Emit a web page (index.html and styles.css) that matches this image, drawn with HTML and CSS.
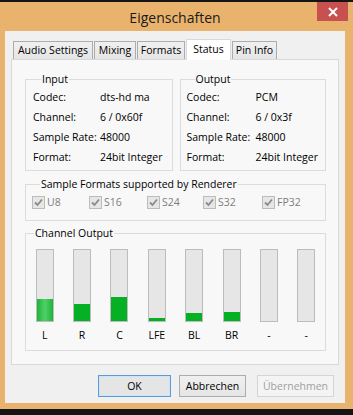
FILE: index.html
```html
<!DOCTYPE html>
<html>
<head>
<meta charset="utf-8">
<link rel="stylesheet" href="styles.css">
</head>
<body>
<div class="window">
  <div class="titlebar">
    <span></span>
    <div class="title">Eigenschaften</div>
    <div class="close"><svg width="10" height="10" viewBox="0 0 10 10"><path d="M1 1L9 9M9 1L1 9" stroke="#fff" stroke-width="2"/></svg></div>
  </div>
  <div class="client">
    <div class="tabs">
      <div class="tab w1">Audio Settings</div>
      <div class="tab w2">Mixing</div>
      <div class="tab w3">Formats</div>
      <div class="tab w4 active">Status</div>
      <div class="tab w5">Pin Info</div>
    </div>
    <div class="panel">
      <div class="io-row">
        <fieldset class="group io in">
          <legend>Input</legend>
          <div class="kv"><span class="k">Codec:</span><span>dts-hd ma</span></div>
          <div class="kv"><span class="k">Channel:</span><span>6 / 0x60f</span></div>
          <div class="kv"><span class="k">Sample Rate:</span><span>48000</span></div>
          <div class="kv"><span class="k">Format:</span><span>24bit Integer</span></div>
        </fieldset>
        <fieldset class="group io out">
          <legend>Output</legend>
          <div class="kv"><span class="k">Codec:</span><span>PCM</span></div>
          <div class="kv"><span class="k">Channel:</span><span>6 / 0x3f</span></div>
          <div class="kv"><span class="k">Sample Rate:</span><span>48000</span></div>
          <div class="kv"><span class="k">Format:</span><span>24bit Integer</span></div>
        </fieldset>
      </div>
      <fieldset class="group formats">
        <legend>Sample Formats supported by Renderer</legend>
        <div class="checks">
          <div class="check"><span class="box"><svg width="11" height="11" viewBox="0 0 11 11"><path d="M2 5.5L4.5 8L9 2.5" fill="none" stroke="#8a8a8a" stroke-width="1.8"/></svg></span>U8</div>
          <div class="check"><span class="box"><svg width="11" height="11" viewBox="0 0 11 11"><path d="M2 5.5L4.5 8L9 2.5" fill="none" stroke="#8a8a8a" stroke-width="1.8"/></svg></span>S16</div>
          <div class="check"><span class="box"><svg width="11" height="11" viewBox="0 0 11 11"><path d="M2 5.5L4.5 8L9 2.5" fill="none" stroke="#8a8a8a" stroke-width="1.8"/></svg></span>S24</div>
          <div class="check"><span class="box"><svg width="11" height="11" viewBox="0 0 11 11"><path d="M2 5.5L4.5 8L9 2.5" fill="none" stroke="#8a8a8a" stroke-width="1.8"/></svg></span>S32</div>
          <div class="check"><span class="box"><svg width="11" height="11" viewBox="0 0 11 11"><path d="M2 5.5L4.5 8L9 2.5" fill="none" stroke="#8a8a8a" stroke-width="1.8"/></svg></span>FP32</div>
        </div>
      </fieldset>
      <fieldset class="group channels">
        <legend>Channel Output</legend>
        <div class="meters">
          <div class="meter"><div class="bar"><div class="fill glow" style="height:22px"></div></div><span>L</span></div>
          <div class="meter"><div class="bar"><div class="fill" style="height:17px"></div></div><span>R</span></div>
          <div class="meter"><div class="bar"><div class="fill" style="height:24px"></div></div><span>C</span></div>
          <div class="meter"><div class="bar"><div class="fill" style="height:3px"></div></div><span>LFE</span></div>
          <div class="meter"><div class="bar"><div class="fill" style="height:8px"></div></div><span>BL</span></div>
          <div class="meter"><div class="bar"><div class="fill" style="height:9px"></div></div><span>BR</span></div>
          <div class="meter"><div class="bar"></div><span>-</span></div>
          <div class="meter"><div class="bar"></div><span>-</span></div>
        </div>
      </fieldset>
    </div>
    <div class="buttons">
      <div class="btn default">OK</div>
      <div class="btn cancel">Abbrechen</div>
      <div class="btn disabled">Übernehmen</div>
    </div>
  </div>
</div>
</body>
</html>
```
FILE: styles.css
```css
* { box-sizing: border-box; }
html, body { margin: 0; padding: 0; }
body {
  width: 353px;
  height: 415px;
  background: #151515;
  font-family: "Open Sans", "Noto Sans", sans-serif;
  font-size: 10.5px;
  color: #000;
  overflow: hidden;
}
.window {
  margin-top: 2px;
  height: 407px;
  background: #e9b36e;
  padding: 0 8px 6px 5px;
  display: flex;
  flex-direction: column;
}
.titlebar {
  height: 29px;
  display: grid;
  grid-template-columns: 1fr auto 1fr;
  align-items: center;
}
.title {
  font-size: 14px;
  color: #1a1a1a;
  padding-top: 1px;
}
.close {
  justify-self: end;
  align-self: start;
  margin-right: -3px;
  width: 31px;
  height: 19px;
  background: #c75050;
  display: flex;
  align-items: center;
  justify-content: center;
}
.client {
  flex: 1;
  background: #f0f0f0;
  padding: 8px 6px 0 6px;
  display: flex;
  flex-direction: column;
}
.tabs {
  display: flex;
  padding-left: 2px;
  height: 20px;
  align-items: flex-end;
}
.tab {
  height: 18px;
  border: 1px solid #acacac;
  border-bottom: none;
  background: linear-gradient(#f0f0f0, #e5e5e5);
  text-align: center;
  line-height: 17px;
  white-space: nowrap;
}
.tab.w1 { width: 80px; }
.tab.w2 { width: 42px; }
.tab.w3 { width: 48px; }
.tab.w4 { width: 45px; }
.tab.w5 { width: 45px; }
.tab + .tab { margin-left: 1px; }
.tab.active {
  height: 21px;
  background: #fff;
  border-color: #d9d9d9;
  margin-bottom: -1px;
  position: relative;
  line-height: 18px;
}
.panel {
  height: 306px;
  border: 1px solid #d9d9d9;
  background: #f8f8f8;
  padding: 11px 12px 0 13px;
  display: flex;
  flex-direction: column;
}
.group {
  margin: 0;
  padding: 0;
  border: 1px solid #dcdcdc;
  min-width: 0;
}
.group legend {
  margin-left: 8px;
  padding: 0 1px;
  line-height: 16px;
}
.io-row {
  display: flex;
  gap: 7px;
}
.io {
  flex: 1;
  padding-bottom: 3px;
}
.io.in { padding-left: 7px; }
.io.out { padding-left: 6px; }
.kv {
  display: flex;
  height: 20px;
  align-items: center;
}
.kv .k { width: 67px; }
.io.out .kv .k { width: 69px; }
.formats {
  margin-top: 5px;
  padding: 0 0 8px 6px;
}
.checks {
  display: grid;
  grid-template-columns: 57px 58px 56px 59px 60px;
  height: 20px;
}
.check {
  display: flex;
  align-items: center;
  color: #7d7d7d;
}
.box {
  width: 13px;
  height: 13px;
  border: 1px solid #bcbcbc;
  background: #e6e6e6;
  margin-right: 2px;
  display: flex;
  align-items: center;
  justify-content: center;
}
.channels {
  margin-top: 4px;
  padding: 8px 0 6px 0;
}
.meters {
  display: grid;
  grid-template-columns: repeat(8, 1fr);
}
.meter {
  display: flex;
  flex-direction: column;
  align-items: center;
}
.bar {
  width: 18px;
  height: 73px;
  border: 1px solid #bcbcbc;
  background: #e6e6e6;
  display: flex;
  flex-direction: column;
  justify-content: flex-end;
}
.fill { background: #06b025; }
.fill.glow { background: linear-gradient(90deg, #1cb43a, #4fd067 50%, #1cb43a); }
.meter span {
  height: 22px;
  line-height: 26px;
}
.buttons {
  display: flex;
  justify-content: flex-end;
  padding: 10px 5px 0 0;
}
.btn {
  height: 22px;
  border: 1px solid #acacac;
  background: linear-gradient(#f0f0f0, #e5e5e5);
  display: flex;
  align-items: center;
  justify-content: center;
}
.btn.default {
  width: 73px;
  border-color: #5a9bd8;
  box-shadow: inset 0 0 0 1px #cfe4f8;
  background: #e5e5e5;
}
.btn.cancel { width: 67px; margin-left: 8px; }
.btn.disabled {
  width: 77px;
  margin-left: 11px;
  border-color: #d5d5d5;
  background: #f4f4f4;
  color: #a0a0a0;
}
```
